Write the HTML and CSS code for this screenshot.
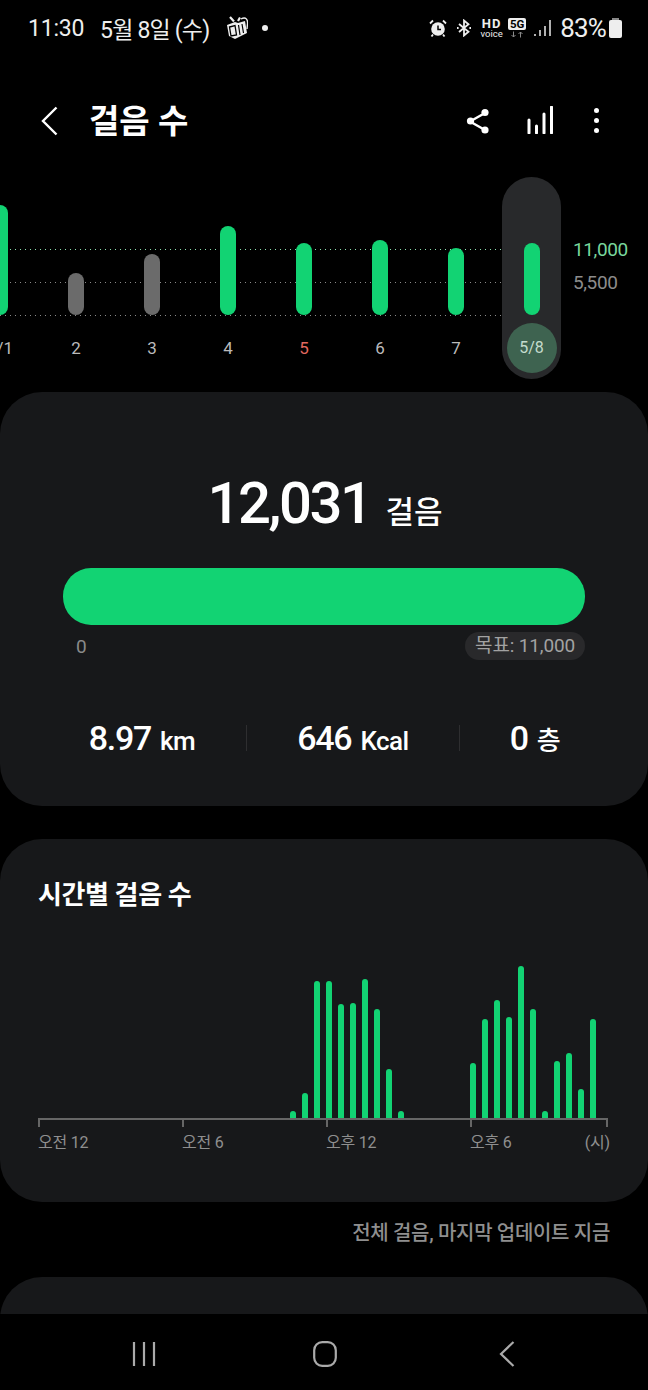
FILE: index.html
```html
<!DOCTYPE html>
<html lang="ko">
<head>
  <meta charset="UTF-8">
  <meta name="viewport" content="width=device-width, initial-scale=1.0">
  <title>걸음 수</title>
  <link rel="stylesheet" href="styles.css">
</head>
<body>
<div class="screen">

  <div class="scroll">
    <!-- STATUS BAR -->
    <div class="status">
      <span class="clock">11:30</span>
      <span class="date">5월 8일 (수)</span>
      <svg class="ic-bag" viewBox="0 0 22 24">
        <path d="M1 9 L9 6 L12 7 L19 5 L21 17 L9 23 L3 20 Z" fill="#eee"/>
        <path d="M3.500 11 L9 9.500 L10.500 19 L5 20 Z" stroke="#000" stroke-width="1.300" fill="none"/>
        <path d="M12.500 9 L14 19 M16 8 L17.500 17" stroke="#000" stroke-width="1.200" fill="none"/>
        <path d="M4 1 L8 5.500 M12 5 L14 1.500" stroke="#eee" stroke-width="2.200" fill="none"/>
        <path d="M15 3 C20 0 22 4 21.500 8 L21 13" stroke="#eee" stroke-width="1.400" fill="none"/>
      </svg>
      <span class="dot"></span>
      <div class="status-right">
        <svg class="ic-alarm" viewBox="0 0 18 18">
          <circle cx="9" cy="10" r="6.800" fill="#eee"/>
          <path d="M9 6.500 V10.500 H12" stroke="#000" stroke-width="1.500" fill="none"/>
          <path d="M1 4.500 L4 1.500 M17 4.500 L14 1.500 M4 15.500 L2.500 17.500 M14 15.500 L15.500 17.500" stroke="#eee" stroke-width="1.800" fill="none"/>
        </svg>
        <svg class="ic-bt" viewBox="0 0 16 18">
          <path d="M8 9 L8 1.500 L12.500 5.200 L3 13 M8 9 L8 16.500 L12.500 12.800 L3 5" stroke="#eee" stroke-width="1.800" fill="none"/>
          <path d="M1 9 h1.600 M13.400 9 h1.600" stroke="#eee" stroke-width="1.800"/>
        </svg>
        <div class="hd"><b>HD</b><span>voice</span></div>
        <div class="net">
          <b>5G</b>
          <svg viewBox="0 0 14 6"><path d="M3.500 0 V5.500 M1.500 3.500 L3.500 5.500 L5.500 3.500 M10.500 6 V0.500 M8.500 2.500 L10.500 0.500 L12.500 2.500" stroke="#888" stroke-width="1" fill="none"/></svg>
        </div>
        <svg class="ic-signal" viewBox="0 0 17 18">
          <path d="M1 17 V15 M6 17 V11 M11 17 V7 M16 17 V1" stroke="#ddd" stroke-width="1.600"/>
        </svg>
        <span class="batt-text">83%</span>
        <div class="batt"><i></i></div>
      </div>
    </div>

    <!-- APP BAR -->
    <div class="appbar">
      <svg class="ic-back" viewBox="0 0 17 30"><path d="M15.500 1.500 L2 15 L15.500 28.500" stroke="#fff" stroke-width="2.400" fill="none"/></svg>
      <h1>걸음 수</h1>
      <svg class="ic-share" viewBox="0 0 24 26">
        <path d="M19 5 L4 13.500 L19 22" stroke="#fff" stroke-width="2.400" fill="none"/>
        <circle cx="19" cy="4.500" r="3.600" fill="#fff"/>
        <circle cx="4.500" cy="13" r="3.600" fill="#fff"/>
        <circle cx="19" cy="22" r="3.600" fill="#fff"/>
      </svg>
      <svg class="ic-bars" viewBox="0 0 26 28">
        <path d="M2 27 V14 M9.500 27 V20 M17 27 V8 M24.500 27 V1" stroke="#fff" stroke-width="3" stroke-linecap="round"/>
      </svg>
      <div class="kebab"><i></i><i></i><i></i></div>
    </div>

    <!-- WEEK CHART -->
    <div class="week">
      <div class="grid-line goal" style="top:72px"></div>
      <div class="grid-line" style="top:105px"></div>
      <div class="grid-line" style="top:138px"></div>
      <div class="week-days">
        <div class="day"><div class="plot"><div class="day-bar" style="height:110px"></div></div><span class="day-label">5/1</span></div>
        <div class="day"><div class="plot"><div class="day-bar low" style="height:42px"></div></div><span class="day-label">2</span></div>
        <div class="day"><div class="plot"><div class="day-bar low" style="height:61px"></div></div><span class="day-label">3</span></div>
        <div class="day"><div class="plot"><div class="day-bar" style="height:89px"></div></div><span class="day-label">4</span></div>
        <div class="day"><div class="plot"><div class="day-bar" style="height:72px"></div></div><span class="day-label red">5</span></div>
        <div class="day"><div class="plot"><div class="day-bar" style="height:75px"></div></div><span class="day-label">6</span></div>
        <div class="day"><div class="plot"><div class="day-bar" style="height:67px"></div></div><span class="day-label">7</span></div>
        <div class="day today"><div class="plot"><div class="day-bar" style="height:72px"></div></div><span class="day-label">5/8</span></div>
      </div>
      <div class="scale">
        <span class="scale-goal">11,000</span>
        <span>5,500</span>
      </div>
    </div>

    <!-- SUMMARY CARD -->
    <div class="card summary">
      <div class="total"><b>12,031</b><span>걸음</span></div>
      <div class="goal-bar"></div>
      <div class="goal-row">
        <span>0</span>
        <span class="goal-pill">목표: 11,000</span>
      </div>
      <div class="stats">
        <div class="stat"><b>8.97</b><span>km</span></div>
        <div class="stat"><b>646</b><span>Kcal</span></div>
        <div class="stat"><b>0</b><span>층</span></div>
      </div>
    </div>

    <!-- HOURLY CARD -->
    <div class="card hourly">
      <h2>시간별 걸음 수</h2>
      <div class="hour-bars">
        <i></i><i></i><i></i><i></i><i></i><i></i><i></i><i></i><i></i><i></i><i></i><i></i>
        <i></i><i></i><i></i><i></i><i></i><i></i><i></i><i></i><i></i>
        <i style="height:7px"></i><i style="height:25px"></i><i style="height:137px"></i><i style="height:137px"></i>
        <i style="height:114px"></i><i style="height:115px"></i><i style="height:139px"></i><i style="height:109px"></i>
        <i style="height:49px"></i><i style="height:7px"></i>
        <i></i><i></i><i></i><i></i><i></i>
        <i style="height:55px"></i><i style="height:99px"></i><i style="height:118px"></i><i style="height:101px"></i>
        <i style="height:152px"></i><i style="height:109px"></i><i style="height:7px"></i><i style="height:57px"></i>
        <i style="height:65px"></i><i style="height:29px"></i><i style="height:99px"></i>
      </div>
      <div class="ticks"><i></i><i></i><i></i><i></i></div>
      <div class="tick-labels">
        <span>오전 12</span>
        <span>오전 6</span>
        <span>오후 12</span>
        <span class="last-label"><span>오후 6</span><span>(시)</span></span>
      </div>
    </div>

    <div class="note">전체 걸음, 마지막 업데이트 지금</div>

    <div class="card next"></div>
  </div>

  <!-- NAV BAR -->
  <div class="nav">
    <svg class="ic-recent" viewBox="0 0 24 26"><path d="M2 1 V25 M12 1 V25 M22 1 V25" stroke="#aaa" stroke-width="2.200"/></svg>
    <svg class="ic-home" viewBox="0 0 24 26"><rect x="1.200" y="1.200" width="21.600" height="23.600" rx="8" stroke="#aaa" stroke-width="2.200" fill="none"/></svg>
    <svg class="ic-nav-back" viewBox="0 0 16 26"><path d="M14.500 1 L2 13 L14.500 25" stroke="#aaa" stroke-width="2.200" fill="none"/></svg>
  </div>

</div>
</body>
</html>
```

FILE: styles.css
```css
* { margin: 0; padding: 0; box-sizing: border-box; }

body {
  font-family: Roboto, 'Noto Sans CJK KR', sans-serif;
  background-color: #000;
  color: #fff;
}

.screen {
  height: 100vh;
  display: flex;
  flex-direction: column;
  overflow: hidden;
}

.scroll { flex: 1; overflow: hidden; }

/* status bar */
.status {
  height: 56px;
  display: flex;
  align-items: center;
  padding-left: 28px;
  color: #eee;
  font-size: 23px;
}

.clock { width: 72px; letter-spacing: -0.2px; }
.date { width: 126px; font-size: 23px; letter-spacing: -0.8px; white-space: nowrap; }
.ic-bag { width: 22px; height: 24px; }
.dot { width: 6px; height: 6px; border-radius: 50%; background: #eee; margin-left: 14px; }

.status-right {
  margin-left: auto;
  margin-right: 26px;
  display: flex;
  align-items: center;
}

.ic-alarm { width: 18px; height: 18px; margin-right: 9px; }
.ic-bt { width: 16px; height: 18px; margin-right: 9px; }

.hd { width: 21px; margin-right: 6px; display: flex; flex-direction: column; align-items: center; line-height: 1; }
.hd b { font-size: 13px; font-weight: 700; letter-spacing: 1px; height: 11px; line-height: 11px; }
.hd span { font-size: 9.500px; height: 9px; line-height: 9px; }

.net { width: 18px; margin-right: 8px; display: flex; flex-direction: column; }
.net b { background: #eee; color: #000; border-radius: 2px; font-size: 11.500px; line-height: 12px; height: 12px; text-align: center; }
.net svg { width: 14px; height: 7px; margin: 1px 2px 0; }

.ic-signal { width: 17px; height: 18px; margin-right: 9px; }
.batt-text { font-size: 26px; letter-spacing: -0.8px; margin-right: 3px; }

.batt { width: 13px; height: 18px; position: relative; background: #eee; border-radius: 2px; margin-top: 1px; }
.batt i { position: absolute; left: 3px; top: -2px; width: 7px; height: 2px; background: #888; }

/* app bar */
.appbar {
  height: 121px;
  padding: 40px 0 0 41px;
  display: flex;
  align-items: flex-start;
}

.ic-back { width: 17px; height: 30px; margin-top: 10px; }

h1 {
  font-size: 33px;
  font-weight: 700;
  line-height: 52px;
  margin-left: 31px;
  width: 377px;
  white-space: nowrap;
}

.ic-share { width: 24px; height: 26px; margin-top: 12px; }
.ic-bars { width: 26px; height: 28px; margin: 10px 0 0 37px; }

.kebab {
  margin: 12px 0 0 41px;
  display: flex;
  flex-direction: column;
  gap: 5px;
}

.kebab i { width: 5px; height: 5px; border-radius: 50%; background: #fff; }

/* week chart */
.week {
  height: 215px;
  position: relative;
  overflow: hidden;
}

.grid-line {
  position: absolute;
  left: 0;
  width: 532px;
  height: 1px;
  background: repeating-linear-gradient(90deg, #8a8a8a 0 1px, transparent 1px 5px);
}

.grid-line.goal { background: repeating-linear-gradient(90deg, #8fdcb0 0 1px, transparent 1px 5px); }

.week-days {
  position: relative;
  display: flex;
  margin-left: -38px;
}

.day {
  width: 76px;
  height: 202px;
  flex-shrink: 0;
  display: flex;
  flex-direction: column;
  align-items: center;
}

.plot {
  height: 138px;
  display: flex;
  align-items: flex-end;
}

.day-bar {
  width: 16px;
  border-radius: 8px;
  background: #12d373;
}

.day-bar.low { background: #6b6b6b; }

.day-label {
  margin-top: 20px;
  font-size: 17px;
  line-height: 26px;
  color: #bbb;
}

.day-label.red { color: #e0685f; }

.today {
  width: 59px;
  margin-left: 8px;
  background: #28292b;
  border-radius: 30px;
}

.today .day-label {
  width: 50px;
  height: 50px;
  margin-top: 8px;
  border-radius: 50%;
  background: #3e6350;
  color: #c4dccd;
  font-size: 16px;
  line-height: 50px;
  text-align: center;
}

.scale {
  position: absolute;
  left: 573px;
  top: 56px;
  display: flex;
  flex-direction: column;
  font-size: 19px;
  line-height: 33px;
  color: #8c8c8c;
  letter-spacing: -0.4px;
}

.scale-goal { color: #79d79d; }

/* cards */
.card { background: #17181a; border-radius: 42px; }

.summary {
  height: 414px;
  padding: 0 63px;
  margin-bottom: 33px;
}

.total {
  height: 176px;
  display: flex;
  align-items: baseline;
  justify-content: center;
  padding: 71px 0 0 2px;
  gap: 15px;
}

.total b {
  font-size: 58px;
  font-weight: 500;
  line-height: 80px;
  letter-spacing: -2.500px;
}

.total span { font-size: 31px; font-weight: 500; }

.goal-bar {
  height: 57px;
  border-radius: 28px;
  background: #12d373;
}

.goal-row {
  height: 28px;
  margin-top: 7px;
  padding-left: 13px;
  display: flex;
  align-items: center;
  justify-content: space-between;
  font-size: 19px;
  color: #8a8a8a;
}

.goal-pill {
  height: 28px;
  line-height: 28px;
  padding: 0 10px;
  border-radius: 14px;
  background: #29292b;
  color: #a2a2a2;
  letter-spacing: -0.15px;
}

.stats {
  display: grid;
  grid-template-columns: 208px 213px 1fr;
  margin: 65px 0 0 -25px;
  width: 572px;
}

.stat {
  height: 26px;
  display: flex;
  align-items: baseline;
  justify-content: center;
  gap: 9px;
  line-height: 26px;
  border-left: 1px solid #2e2e30;
}

.stat:first-child { border-left: none; }
.stat b { font-size: 34px; font-weight: 500; letter-spacing: -1.300px; }
.stat span { font-size: 26px; font-weight: 500; letter-spacing: -0.5px; }

.hourly {
  height: 363px;
  padding: 38px 38px 0;
}

h2 {
  font-size: 26px;
  font-weight: 700;
  line-height: 36px;
  letter-spacing: -0.4px;
}

.hour-bars {
  height: 197px;
  margin-top: 8px;
  display: flex;
  align-items: flex-end;
  gap: 6px;
}

.hour-bars i {
  width: 6px;
  flex-shrink: 0;
  background: #12d373;
  border-radius: 3px 3px 0 0;
}

.ticks {
  width: 570px;
  height: 9px;
  border-top: 2px solid #666;
  display: grid;
  grid-template-columns: 144px 144px 144px 1fr;
}

.ticks i { border-left: 2px solid #666; }
.ticks i:last-child { border-right: 2px solid #666; }

.tick-labels {
  width: 572px;
  margin-top: 4px;
  display: grid;
  grid-template-columns: 144px 144px 144px 1fr;
  font-size: 16px;
  line-height: 24px;
  letter-spacing: -0.2px;
  color: #8f8f8f;
}

.last-label { display: flex; justify-content: space-between; }

.note {
  height: 75px;
  padding: 18px 38px 0 0;
  text-align: right;
  font-size: 20px;
  font-weight: 500;
  line-height: 26px;
  color: #8f8f8f;
  letter-spacing: -0.32px;
}

.next { height: 200px; }

/* nav bar */
.nav {
  height: 76px;
  background: #000;
  display: flex;
  align-items: center;
  padding: 4px 0 0 132px;
  flex-shrink: 0;
}

.ic-recent { width: 24px; height: 26px; }
.ic-home { width: 24px; height: 26px; margin-left: 157px; }
.ic-nav-back { width: 16px; height: 26px; margin-left: 162px; }
```
